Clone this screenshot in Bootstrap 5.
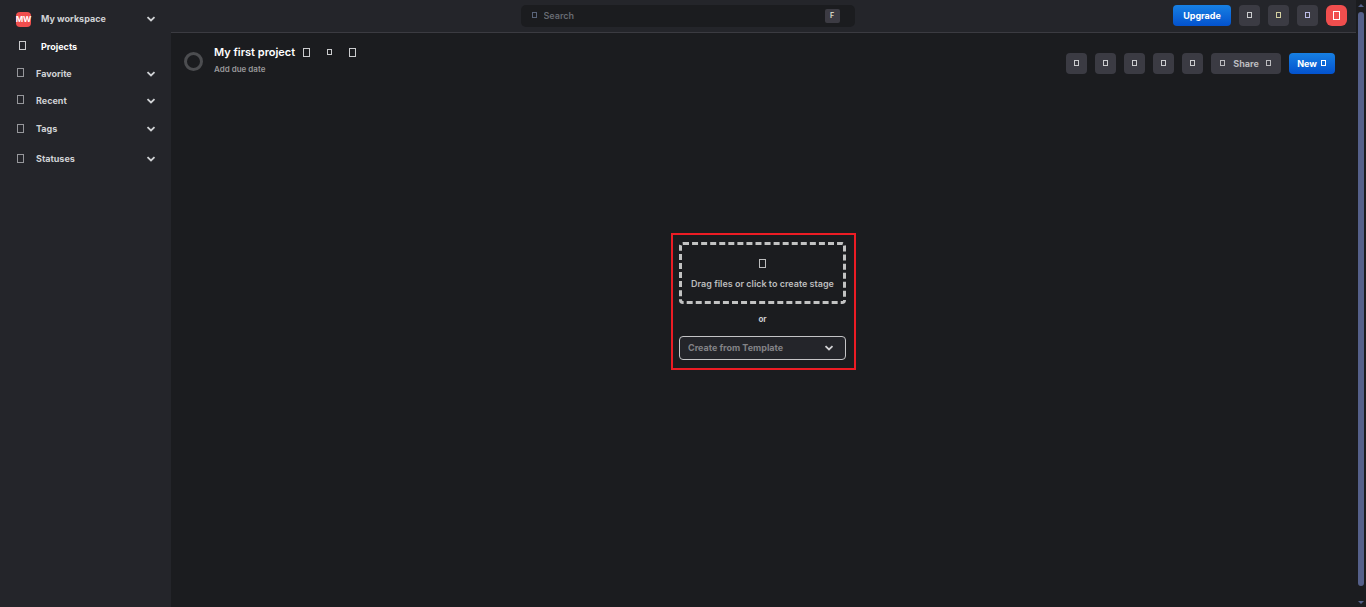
<!DOCTYPE html>
<html lang="en">
<head>
<meta charset="utf-8">
<meta name="viewport" content="width=device-width, initial-scale=1">
<title>My first project</title>
<link href="https://cdn.jsdelivr.net/npm/bootstrap@5.3.0/dist/css/bootstrap.min.css" rel="stylesheet">
<style>
  body { background: #1b1c1f; color: #cbccce; font: 700 9px/14px Inter, sans-serif; }
  button { font: inherit; color: inherit; border: 0; background: none; padding: 0; }
  svg { flex: none; display: block; }
  .glyph { fill: none; stroke: currentColor; }
  .chev { fill: none; stroke: currentColor; stroke-width: 1.8; }

  .side { width: 171px; background: #24252a; padding-top: 5px; }
  .side-item { height: 27px; padding: 0 15px 0 17px; gap: 11px; text-align: left; width: 100%; color: #d0d2d5; }
  .side-item.tall { height: 30px; }
  .side-item.head { height: 28px; gap: 10px; padding-left: 16px; }
  .side-item .glyph { color: #96979b; margin-bottom: 2px; }
  a.side-item { color: #fff; text-decoration: none; padding-left: 19px; gap: 14px; }
  a.side-item .glyph { color: #cbccce; }
  .logo { width: 15px; height: 15px; border-radius: 4px; background: #f04e4e; color: #fff; font-size: 8px; }

  .topbar { height: 33px; background: #24252a; border-bottom: 1px solid #3b3b41; padding: 0 9px 1px 39px; }
  .search { width: 334px; height: 22px; border-radius: 5px; background: #1b1c1f; padding: 0 15px 0 11px; gap: 6px; color: #59647a; }
  .search input { background: none; border: 0; outline: 0; padding: 0; color: #cbccce; font: 600 9px/14px Inter, sans-serif; min-width: 0; }
  .search input::placeholder { color: #666a72; opacity: 1; }
  .keycap { width: 15px; height: 14px; border-radius: 2px; background: #3c3b43; color: #d5d3c2; font: 700 7px/14px Inter, sans-serif; text-align: center; }

  .tool { height: 21px; min-width: 21px; border-radius: 4px; background: #3b3b43; color: #cbccce; }
  .tool .glyph { margin-bottom: 1px; }
  .tool.avatar { background: #f04e4e; color: #fff; border-radius: 6px; }
  .tool.share { width: 70px; gap: 7px; color: #bcbcbf; }
  .tool.primary { background: linear-gradient(#1780e3, #0352ce); color: #fff; }
  .tool.upgrade { width: 58px; }
  .tool.new { width: 46px; gap: 4px; }

  .project { padding: 11px 21px 0 13px; height: 58px; }
  .project-body { margin-left: 11px; }
  .ring { width: 19px; height: 19px; border: 3px solid #4c4d50; border-radius: 50%; }
  .project h1 { font: 600 11px/17px Inter, sans-serif; color: #fff; margin: 0; }
  .due { font-size: 8px; line-height: 16px; font-weight: 600; color: #99999b; }
  .tools { margin-top: 9px; }

  .stage { padding-bottom: 96px; }
  .pick { width: 185px; border: 2px solid #ec1c24; padding: 7px 8px 8px 6px; }
  .drop { width: 100%; height: 62px; border: 3px dashed #c2c2c2; border-radius: 4px; color: #bcbcbd; font-weight: 600; gap: 5px; white-space: nowrap; }
  .or { font-size: 8px; line-height: 30px; height: 32px; }
  .template { appearance: none; width: 100%; height: 24px; border: 1px solid #c4c4c6; border-radius: 4px; padding: 0 8px; color: #828286; font: 700 9px/14px Inter, sans-serif;
    background: #24252a url("data:image/svg+xml,%3Csvg xmlns='http://www.w3.org/2000/svg' width='10' height='8'%3E%3Cpath d='M1.5 2.2l3.5 3.3 3.5-3.3' fill='none' stroke='%23d0d0d2' stroke-width='1.8'/%3E%3C/svg%3E") no-repeat right 11px center; }

  .scroll { width: 10px; padding: 4px 2px 3px; color: #55608a; }
  .thumb { width: 6px; border-radius: 3px; background: #55608a; margin: 5px 0 15px; }
</style>
</head>
<body>
<svg width="0" height="0" class="position-absolute" aria-hidden="true">
  <symbol id="g-big" viewBox="0 0 8 9"><rect x=".5" y=".5" width="6" height="8"/></symbol>
  <symbol id="g-small" viewBox="0 0 6 7"><rect x=".5" y=".5" width="4" height="5"/></symbol>
  <symbol id="g-down" viewBox="0 0 10 8"><path d="M1.5 2.2l3.5 3.3 3.5-3.3"/></symbol>
</svg>
<div class="d-flex vh-100">
  <nav class="side flex-shrink-0" aria-label="Workspace">
    <button class="side-item head d-flex align-items-center"><span class="logo d-flex align-items-center justify-content-center">MW</span><span class="flex-grow-1">My workspace</span><svg class="chev" width="10" height="8"><use href="#g-down"/></svg></button>
    <a href="#" class="side-item d-flex align-items-center"><svg class="glyph" width="8" height="9"><use href="#g-big"/></svg><span>Projects</span></a>
    <button class="side-item d-flex align-items-center"><svg class="glyph" width="8" height="9"><use href="#g-big"/></svg><span class="flex-grow-1">Favorite</span><svg class="chev" width="10" height="8"><use href="#g-down"/></svg></button>
    <button class="side-item d-flex align-items-center"><svg class="glyph" width="8" height="9"><use href="#g-big"/></svg><span class="flex-grow-1">Recent</span><svg class="chev" width="10" height="8"><use href="#g-down"/></svg></button>
    <button class="side-item tall d-flex align-items-center"><svg class="glyph" width="8" height="9"><use href="#g-big"/></svg><span class="flex-grow-1">Tags</span><svg class="chev" width="10" height="8"><use href="#g-down"/></svg></button>
    <button class="side-item tall d-flex align-items-center"><svg class="glyph" width="8" height="9"><use href="#g-big"/></svg><span class="flex-grow-1">Statuses</span><svg class="chev" width="10" height="8"><use href="#g-down"/></svg></button>
  </nav>

  <div class="d-flex flex-column flex-grow-1">
    <header class="topbar d-flex align-items-center gap-2">
      <label class="search d-flex align-items-center mx-auto">
        <svg class="glyph" width="6" height="7"><use href="#g-small"/></svg>
        <input class="flex-grow-1" type="search" placeholder="Search" aria-label="Search">
        <kbd class="keycap p-0">F</kbd>
      </label>
      <button class="tool primary upgrade">Upgrade</button>
      <button class="tool d-flex align-items-center justify-content-center" aria-label="Help"><svg class="glyph" width="6" height="7"><use href="#g-small"/></svg></button>
      <button class="tool d-flex align-items-center justify-content-center" aria-label="Theme"><svg class="glyph" width="6" height="7" color="#d3cfa0"><use href="#g-small"/></svg></button>
      <button class="tool d-flex align-items-center justify-content-center" aria-label="Notifications"><svg class="glyph" width="6" height="7" color="#bcbce6"><use href="#g-small"/></svg></button>
      <button class="tool avatar d-flex align-items-center justify-content-center" aria-label="Account"><svg class="glyph" width="8" height="9"><use href="#g-big"/></svg></button>
    </header>

    <main class="d-flex flex-column flex-grow-1">
      <div class="project d-flex align-items-start">
        <span class="ring mt-2"></span>
        <div class="project-body">
          <div class="d-flex align-items-center">
            <h1>My first project</h1>
            <button class="ms-2" aria-label="Edit"><svg class="glyph" width="8" height="9"><use href="#g-big"/></svg></button>
            <button class="ms-3" aria-label="Favorite"><svg class="glyph" width="6" height="7"><use href="#g-small"/></svg></button>
            <button class="ms-3" aria-label="More"><svg class="glyph" width="8" height="9"><use href="#g-big"/></svg></button>
          </div>
          <button class="due d-block">Add due date</button>
        </div>
        <div class="tools d-flex gap-2 ms-auto">
          <button class="tool d-flex align-items-center justify-content-center" aria-label="Filter"><svg class="glyph" width="6" height="7"><use href="#g-small"/></svg></button>
          <button class="tool d-flex align-items-center justify-content-center" aria-label="Sort"><svg class="glyph" width="6" height="7"><use href="#g-small"/></svg></button>
          <button class="tool d-flex align-items-center justify-content-center" aria-label="View"><svg class="glyph" width="6" height="7"><use href="#g-small"/></svg></button>
          <button class="tool d-flex align-items-center justify-content-center" aria-label="Comments"><svg class="glyph" width="6" height="7"><use href="#g-small"/></svg></button>
          <button class="tool d-flex align-items-center justify-content-center" aria-label="Download"><svg class="glyph" width="6" height="7"><use href="#g-small"/></svg></button>
          <button class="tool share d-flex align-items-center justify-content-center"><svg class="glyph" width="6" height="7"><use href="#g-small"/></svg>Share<svg class="glyph" width="6" height="7"><use href="#g-small"/></svg></button>
          <button class="tool primary new d-flex align-items-center justify-content-center">New<svg class="glyph" width="6" height="7"><use href="#g-small"/></svg></button>
        </div>
      </div>

      <div class="stage flex-grow-1 d-flex align-items-center justify-content-center">
        <div class="pick text-center">
          <button class="drop d-flex flex-column align-items-center justify-content-center"><svg class="glyph mt-1 mb-1" width="8" height="9"><use href="#g-big"/></svg>Drag files or click to create stage</button>
          <div class="or">or</div>
          <select class="template d-block" aria-label="Create from Template"><option>Create from Template</option></select>
        </div>
      </div>
    </main>
  </div>

  <div class="scroll d-flex flex-column align-items-center" aria-hidden="true">
    <svg width="6" height="3" fill="currentColor"><path d="M0 3l3-3 3 3z"/></svg>
    <div class="thumb flex-grow-1"></div>
    <svg width="6" height="3" fill="currentColor"><path d="M0 0l3 3 3-3z"/></svg>
  </div>
</div>
<script src="https://cdn.jsdelivr.net/npm/bootstrap@5.3.0/dist/js/bootstrap.bundle.min.js"></script>
</body>
</html>
